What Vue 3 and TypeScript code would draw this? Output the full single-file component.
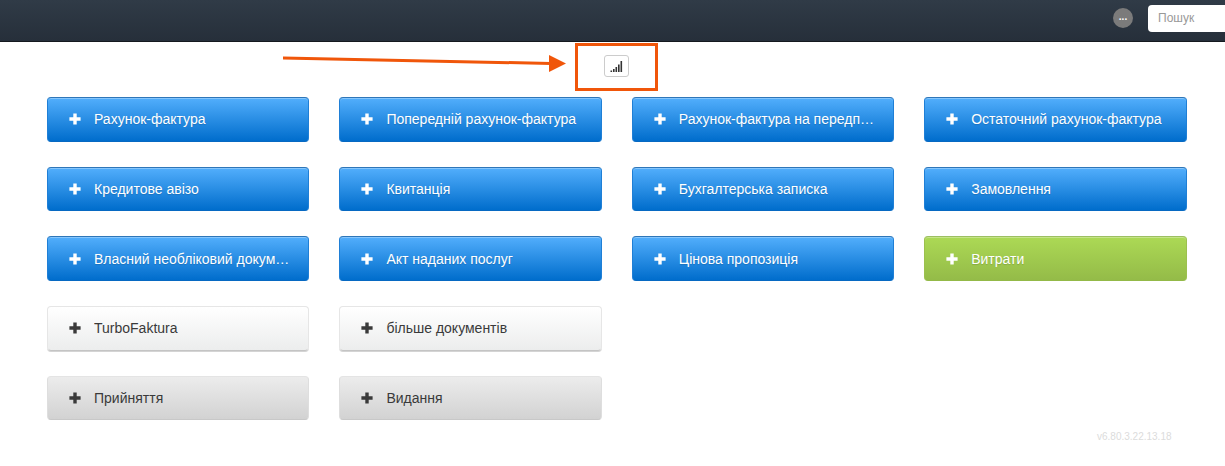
<script setup lang="ts">
interface Doc { label: string; kind: string }
const docs: (Doc | null)[] = [
  { label: 'Рахунок-фактура', kind: 'blue' },
  { label: 'Попередній рахунок-фактура', kind: 'blue' },
  { label: 'Рахунок-фактура на передплату', kind: 'blue' },
  { label: 'Остаточний рахунок-фактура', kind: 'blue' },
  { label: 'Кредитове авізо', kind: 'blue' },
  { label: 'Квитанція', kind: 'blue' },
  { label: 'Бухгалтерська записка', kind: 'blue' },
  { label: 'Замовлення', kind: 'blue' },
  { label: 'Власний необліковий документ', kind: 'blue' },
  { label: 'Акт наданих послуг', kind: 'blue' },
  { label: 'Цінова пропозиція', kind: 'blue' },
  { label: 'Витрати', kind: 'green' },
  { label: 'TurboFaktura', kind: 'white' },
  { label: 'більше документів', kind: 'white' },
  null,
  null,
  { label: 'Прийняття', kind: 'grey' },
  { label: 'Видання', kind: 'grey' },
]
const bars = [1.5, 3, 5, 7.5, 11]
</script>

<template>
  <div class="page">
    <header class="topbar">
      <span class="dots">...</span>
      <input class="search" placeholder="Пошук" />
    </header>
    <section class="tools">
      <svg class="arrow" width="300" height="30" viewBox="0 0 300 30">
        <line x1="0" y1="7" x2="268" y2="12.5" stroke="#f0560a" stroke-width="3" />
        <polygon points="266,4 283,12.5 266,21" fill="#f0560a" />
      </svg>
      <div class="highlight">
        <button class="signal">
          <svg width="13" height="11" viewBox="0 0 13 11">
            <rect v-for="(h, i) in bars" :key="i" :x="i * 2.5 + 0.5" :y="11 - h" width="1.6" :height="h" fill="#333" />
          </svg>
        </button>
      </div>
    </section>
    <main class="grid">
      <template v-for="(d, i) in docs" :key="i">
        <button v-if="d" class="doc" :class="d.kind">
          <svg class="plus" width="12" height="12" viewBox="0 0 12 12">
            <path d="M4.3 0.4h3.4v3.9h3.9v3.4H7.7v3.9H4.3V7.7H0.4V4.3h3.9z" />
          </svg>
          <span class="label">{{ d.label }}</span>
        </button>
        <div v-else class="empty"></div>
      </template>
    </main>
    <footer class="version">v6.80.3.22.13.18</footer>
  </div>
</template>

<style scoped>
.page {
  position: relative;
  width: 1225px;
  height: 466px;
  overflow: hidden;
  background: #fff;
  font-family: "Liberation Sans", Arial, sans-serif;
}
.topbar {
  height: 41px;
  border-bottom: 1px solid #15191f;
  background: linear-gradient(#303b47, #262f3a);
  display: flex;
  align-items: flex-start;
  box-sizing: content-box;
}
.dots {
  width: 20px;
  height: 20px;
  margin: 8px 15px 0 auto;
  border-radius: 50%;
  background: #7b7b7b;
  color: #fff;
  font-size: 10px;
  font-weight: 700;
  line-height: 18px;
  text-align: center;
}
.search {
  flex: none;
  width: 77px;
  height: 25px;
  margin: 5px -10px 0 0;
  padding: 0 0 2px 10px;
  border: 0;
  border-radius: 4px 0 0 4px;
  background: #fff;
  font: 12px "Liberation Sans", Arial, sans-serif;
  outline: none;
}
.search::placeholder {
  color: #999;
}
.tools {
  position: relative;
  height: 55px;
}
.arrow {
  position: absolute;
  left: 283px;
  top: 9px;
}
.highlight {
  position: absolute;
  left: 575px;
  top: 1px;
  width: 83px;
  height: 48px;
  box-sizing: border-box;
  border: 3.5px solid #f0560a;
  display: flex;
  align-items: center;
  justify-content: center;
}
.signal {
  width: 25px;
  height: 22px;
  margin-top: -2px;
  padding: 0;
  border: 1px solid #ccc;
  border-radius: 3px;
  background: #fff;
  display: flex;
  align-items: center;
  justify-content: center;
}
.grid {
  display: grid;
  grid-template-columns: repeat(4, 262.4px);
  column-gap: 30px;
  grid-auto-rows: 44.67px;
  row-gap: 25px;
  margin-left: 47px;
}
.doc {
  display: flex;
  align-items: center;
  min-width: 0;
  padding: 0 12px 0 21px;
  border-radius: 4px;
  border: 1px solid;
  font: 14px "Liberation Sans", Arial, sans-serif;
  text-align: left;
}
.plus {
  flex: none;
  margin-right: 13px;
  fill: currentColor;
}
.label {
  flex: 1;
  min-width: 0;
  overflow: hidden;
  white-space: nowrap;
  text-overflow: ellipsis;
}
.blue {
  color: #fff;
  background: linear-gradient(#52aefc, #006dcc);
  border-color: #2e76b8 #1f7fd6 #0769c2;
  box-shadow: inset 0 1px 0 rgba(255, 255, 255, 0.3);
  text-shadow: 0 1px 1px rgba(0, 0, 0, 0.15);
}
.green {
  color: #fff;
  background: linear-gradient(#acd955, #94bb48);
  border-color: #9cbf62 #9cc04f #93b948;
  box-shadow: inset 0 1px 0 rgba(255, 255, 255, 0.3);
  text-shadow: 0 1px 1px rgba(0, 0, 0, 0.15);
}
.white {
  color: #3a3a3a;
  background: linear-gradient(#fff, #eceded);
  border-color: #e6e6e6 #e6e6e6 #c4c4c4;
  box-shadow: 0 1px 0 #d4d4d4;
}
.grey {
  color: #3a3a3a;
  background: linear-gradient(#ececec, #d2d2d2);
  border-color: #e4e4e4 #dedede #c8c8c8;
}
.version {
  position: absolute;
  left: 1097px;
  top: 430px;
  color: #dcdcdc;
  font-size: 10px;
  line-height: 14px;
}
</style>
